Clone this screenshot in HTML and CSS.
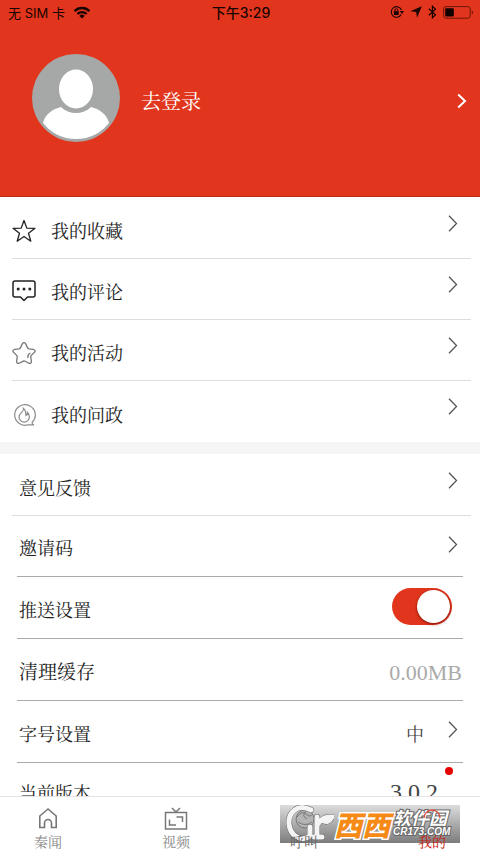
FILE: index.html
```html
<!DOCTYPE html>
<html lang="zh-CN">
<head>
<meta charset="utf-8">
<meta name="viewport" content="width=device-width, initial-scale=1">
<title>我的</title>
<link rel="stylesheet" href="styles.css">
</head>
<body>
<div class="app">
  <header class="hero">
    <div class="status">
      <div class="status-left">
        <span>无 SIM 卡</span>
        <svg width="18" height="13" viewBox="0 0 18 13" aria-hidden="true"><g fill="none" stroke="#180400" stroke-width="2.4"><path d="M1.6 5.1a10.4 10.4 0 0 1 14.8 0"/><path d="M4.4 8a6.5 6.5 0 0 1 9.2 0"/></g><path d="M6.4 9.9a3.7 3.7 0 0 1 5.2 0L9 12.6z" fill="#180400"/></svg>
      </div>
      <time class="clock">下午3:29</time>
      <div class="status-right">
        <svg width="14" height="14" viewBox="0 0 14 14" aria-hidden="true"><path d="M11.2 9.6A5.3 5.3 0 1 1 11.5 5" fill="none" stroke="#180400" stroke-width="1.1"/><path d="M9.8 6h4.2l-2 2.9z" fill="#180400"/><rect x="3.9" y="6.2" width="4.8" height="3.8" fill="#180400"/><path d="M4.9 6.5V5.2a1.4 1.4 0 0 1 2.8 0v1.3" fill="none" stroke="#180400"/></svg>
        <svg width="12" height="12" viewBox="0 0 12 12" aria-hidden="true"><path d="M11.8.2 7 11.8 6.2 5.9.4 5.2z" fill="#180400"/></svg>
        <svg width="9" height="14" viewBox="0 0 9 14" aria-hidden="true"><path d="M.8 3.8 7.5 9.8 4.4 12.8V1.2L7.5 4.2.8 10.2" fill="none" stroke="#180400" stroke-width="1.2"/></svg>
        <svg width="31" height="13" viewBox="0 0 31 13" aria-hidden="true"><rect x=".6" y=".6" width="26.6" height="11.6" rx="2.4" fill="none" stroke="#6d1507"/><rect x="2.2" y="2.2" width="8.6" height="8.4" rx="1" fill="#100000"/><path d="M28.8 4.400c1.600.8 1.600 3.200 0 4z" fill="#6d1507"/></svg>
      </div>
    </div>
    <a class="login" href="#login">
      <svg class="avatar" viewBox="0 0 88 88" aria-hidden="true"><circle cx="44" cy="44" r="44" fill="#a6a8a7"/><ellipse cx="44" cy="35" rx="17" ry="19.500" fill="#fff"/><path d="M29 53C21 55 13 60 11 69c8 10 19 16 33 16s25-6 33-16c-2-9-10-14-18-16-8 8-22 8-30 0z" fill="#fff"/></svg>
      <span class="login-text">去登录</span>
      <svg class="login-arrow" viewBox="0 0 10 16" aria-hidden="true"><path d="m1.200 1.500 6.800 6.500-6.800 6.500" fill="none" stroke="#fff" stroke-width="2"/></svg>
    </a>
  </header>

  <main class="content">
    <nav class="group">
      <a class="row" href="#favorites">
        <svg class="icon" viewBox="0 0 24 24" aria-hidden="true"><path d="m12 1.500 2.800 7.600 8.200.2-6.500 5 2.300 7.900L12 17.500l-6.800 4.700 2.300-7.900-6.500-5 8.200-.2z" fill="none" stroke="#222" stroke-width="1.300" stroke-linejoin="round"/></svg>
        <span class="label">我的收藏</span>
        <svg class="arrow" viewBox="0 0 10 17"><path d="m1 .8 7.500 7.700L1 16.200"/></svg>
      </a>
      <a class="row" href="#comments">
        <svg class="icon" viewBox="0 0 24 24" aria-hidden="true"><path d="M3 1h18q2 0 2 2v12q0 2-2 2h-5.500L12 20.500 8.500 17H3q-2 0-2-2V3q0-2 2-2z" fill="none" stroke="#222" stroke-width="1.500" stroke-linejoin="round"/><g fill="#222"><circle cx="6.200" cy="9" r="1.500"/><circle cx="12" cy="9" r="1.500"/><circle cx="17.800" cy="9" r="1.500"/></g></svg>
        <span class="label">我的评论</span>
        <svg class="arrow" viewBox="0 0 10 17"><path d="m1 .8 7.500 7.700L1 16.200"/></svg>
      </a>
      <a class="row" href="#events">
        <svg class="icon" viewBox="0 0 24 24" aria-hidden="true"><path d="M10.300 2.900q1.700-2.400 3.400 0l1.800 3.700q.5 1 1.500 1.200l4.200.6q3 .8 1.200 3l-3.100 3q-.7.8-.5 1.700l.6 4.200q0 2.900-2.600 1.900l-3.600-1.900q-1.200-.6-2.400 0l-3.600 1.900q-2.600 1-2.600-1.900l.6-4.200q.2-.9-.5-1.700l-3.100-3q-1.800-2.200 1.200-3L7 7.800q1-.2 1.500-1.200zM18.500 12c-2 .8-3 2.500-2.500 5" fill="none" stroke="#777" stroke-width="1.300"/></svg>
        <span class="label">我的活动</span>
        <svg class="arrow" viewBox="0 0 10 17"><path d="m1 .8 7.500 7.700L1 16.200"/></svg>
      </a>
      <a class="row" href="#politics">
        <svg class="icon" viewBox="0 0 24 24" aria-hidden="true"><g fill="none" stroke="#8b8b8b" stroke-width="1.200"><path d="M20 19.500A10.300 10.300 0 1 0 16 21.800q3 .2 6 0-2-.4-2-2.300"/><path d="M11.500 5.500c1 3-4.500 4.500-4.500 8.500a5.200 5.200 0 0 0 10.400 0c0-2-.9-3.400-1.900-4.500 0 1.500-.5 2.500-1.500 3 0-3-.5-5.500-2.500-7z"/></g></svg>
        <span class="label">我的问政</span>
        <svg class="arrow" viewBox="0 0 10 17"><path d="m1 .8 7.500 7.700L1 16.200"/></svg>
      </a>
    </nav>

    <section class="group">
      <a class="row text-row" href="#feedback">
        <span class="label">意见反馈</span>
        <svg class="arrow" viewBox="0 0 10 17"><path d="m1 .8 7.500 7.700L1 16.200"/></svg>
      </a>
      <a class="row setting" href="#invite">
        <span class="label">邀请码</span>
        <svg class="arrow" viewBox="0 0 10 17"><path d="m1 .8 7.500 7.700L1 16.200"/></svg>
      </a>
      <div class="row setting tall">
        <label class="label" for="push">推送设置</label>
        <input class="switch" id="push" type="checkbox" checked>
      </div>
      <a class="row setting tall" href="#cache">
        <span class="label large">清理缓存</span>
        <span class="size">0.00MB</span>
      </a>
      <a class="row setting tall" href="#font-size">
        <span class="label">字号设置</span>
        <span class="choice">中</span>
        <svg class="arrow" viewBox="0 0 10 17"><path d="m1 .8 7.500 7.700L1 16.200"/></svg>
      </a>
      <a class="row setting last" href="#version">
        <span class="label">当前版本</span>
        <span class="version">3.0.2<i class="dot"></i></span>
      </a>
    </section>
  </main>

  <footer class="footer">
    <nav class="tabs">
      <a class="tab" href="#news">
        <svg class="tab-icon" viewBox="0 0 24 24" aria-hidden="true"><path d="M12 2 3.800 9v11.500h4.700V16a3.500 3.500 0 0 1 7 0v4.500h4.700V9z" fill="none" stroke="#777" stroke-width="1.600"/></svg>
        <span>秦闻</span>
      </a>
      <a class="tab" href="#video">
        <svg class="tab-icon" viewBox="0 0 24 24" aria-hidden="true"><path d="M1.500 5.500h21v16.500h-21zM8 1l4 4 4-4M5.500 12.500V18H12M12.500 10h6v5" fill="none" stroke="#777" stroke-width="1.500"/></svg>
        <span>视频</span>
      </a>
      <a class="tab" href="#call">
        <svg class="tab-icon" viewBox="0 0 24 24" aria-hidden="true"></svg>
        <span class="over dim">呼叫</span>
      </a>
      <a class="tab active" href="#me">
        <svg class="tab-icon over" viewBox="0 0 24 24" aria-hidden="true"><g fill="none" stroke="#d8453c" stroke-width="1.300"><path d="M4 11a8 8 0 1 1 16 0"/></g></svg>
        <span class="over">我的</span>
      </a>
    </nav>
    <div class="brand">
      <svg class="brand-logo" viewBox="0 0 54 38" aria-hidden="true">
        <circle cx="25" cy="14" r="9" fill="#b4b4b4" stroke="#777"/>
        <path d="M17 12q5-7 9-3t7 0M18 17q7 5 14 0M26 6q-5 5 1 8" fill="none" stroke="#777"/>
        <g fill="none" stroke-linecap="round">
          <path d="M31 5C17-2 8 8 9 19s12 19 21 12V22M37 12v19M34 32h8M38 19q5-8 14-7-4 7-10 3" stroke="#666" stroke-width="6"/>
          <path d="M31 5C17-2 8 8 9 19s12 19 21 12V22M37 12v19M34 32h8M38 19q5-8 14-7-4 7-10 3" stroke="#f4f4f4" stroke-width="5"/>
        </g>
      </svg>
      <span class="brand-main">西西</span>
      <span class="brand-side"><b class="brand-name">软件园</b><small class="brand-url">CR173.COM</small></span>
    </div>
  </footer>
</div>
</body>
</html>
```
FILE: styles.css
```css
* { box-sizing: border-box; }

body {
  margin: 0;
  background: #fff;
  color: #222;
  font-family: "Liberation Serif", "Noto Serif CJK SC", "Noto Sans CJK SC", serif;
  font-size: 18px;
  font-weight: 400;
}

a { color: inherit; text-decoration: none; }
svg { display: block; flex: none; }

.app {
  display: flex;
  flex-direction: column;
  height: 100vh;
  overflow: hidden;
}

.hero {
  flex: none;
  padding-bottom: 54px;
  background: #e1361d;
  border-bottom: 1px solid #b72c18;
}

.status {
  display: grid;
  grid-template-columns: 1fr auto 1fr;
  align-items: center;
  height: 24px;
  padding: 0 6px 0 8px;
  color: #180400;
  font-family: Inter, "Noto Sans CJK SC", sans-serif;
  font-size: 13px;
}

.status-left, .status-right { display: flex; align-items: center; gap: 6px; }
.status-left { gap: 8px; }
.status-right { justify-content: flex-end; }
.clock { font-size: 14px; font-weight: 500; }

.login {
  display: flex;
  align-items: center;
  gap: 21px;
  margin-top: 30px;
  padding: 0 13px 0 32px;
  color: #fff;
  font-size: 20px;
}

.avatar { width: 88px; height: 88px; }
.login-text { padding-top: 5px; }
.login-arrow { width: 10px; height: 16px; margin: 5px 0 0 auto; }

.content { flex: 1; min-height: 0; overflow: hidden; }
.group { padding-top: 1px; }
.group + .group { border-top: 12px solid #f5f5f5; }

.row {
  display: flex;
  align-items: center;
  height: 61px;
  margin: 0 9px 0 12px;
  padding: 4px 13px 0 0;
  border-bottom: 1px solid #ddd;
}

.row:last-child { border-bottom: 0; }
.icon { width: 24px; height: 24px; margin: 2px 15px 0 0; }
.label { flex: 1; }
.large { font-size: 19px; }

.arrow { width: 10px; height: 17px; align-self: flex-start; margin-top: 13px; }
.arrow path { fill: none; stroke: #555; stroke-width: 1.3; }

.text-row { padding-left: 7px; }
.setting { margin: 0 17px; padding: 2px 5px 0 2px; border-color: #aaa; }
.setting .arrow { margin-top: 18px; }
.tall { height: 62px; }
.last { height: 56px; }

.switch {
  appearance: none;
  width: 60px;
  height: 37px;
  margin: 0 6px 5px 0;
  border-radius: 19px;
  background: #e1361d;
}

.switch::before {
  content: "";
  display: block;
  width: 33px;
  height: 33px;
  margin: 2px 2px 2px 25px;
  border-radius: 50%;
  background: #fff;
  box-shadow: 0 1px 3px #7a1008;
}

.size { margin-right: -4px; padding-top: 4px; color: #aaa; font-size: 22px; }
.choice { margin-right: 24px; color: #444; }
.version { position: relative; margin-right: 20px; color: #444; font-size: 24px; }

.dot {
  position: absolute;
  top: -12px;
  right: -15px;
  width: 8px;
  height: 8px;
  border-radius: 50%;
  background: #e60000;
}

.footer {
  position: relative;
  flex: none;
  height: 57px;
  overflow: hidden;
  border-top: 1px solid #e4e4e4;
  background: #fff;
}

.tabs {
  display: grid;
  grid-template-columns: repeat(4, 1fr);
  margin: 0 -16px;
  padding-top: 10px;
}

.tab {
  display: flex;
  flex-direction: column;
  align-items: center;
  color: #888;
  font-size: 14px;
  line-height: 24px;
}

.tab-icon { width: 24px; height: 24px; }
.over { position: relative; z-index: 2; }
.dim { color: #666; }
.active { color: #c71b10; }

.brand {
  position: absolute;
  right: 20px;
  bottom: 10px;
  display: flex;
  align-items: center;
  width: 180px;
  height: 38px;
  background: linear-gradient(#dcdcdc, #7c7c7c);
  font-family: "Noto Sans CJK SC", sans-serif;
  white-space: nowrap;
}

.brand-logo { width: 54px; height: 38px; }

.brand-main {
  color: #f58a16;
  font-size: 28px;
  font-style: italic;
  font-weight: 900;
  line-height: 36px;
  -webkit-text-stroke: 3px #fff;
  paint-order: stroke fill;
}

.brand-side {
  display: flex;
  flex-direction: column;
  margin: 0 0 4px 3px;
  color: #fff;
  font-style: italic;
  -webkit-text-stroke: 2px #666;
  paint-order: stroke fill;
}

.brand-name { font-size: 18px; font-weight: 700; line-height: 20px; }
.brand-url { font-family: "Liberation Sans", sans-serif; font-size: 10px; font-weight: 700; line-height: 10px; }
```
